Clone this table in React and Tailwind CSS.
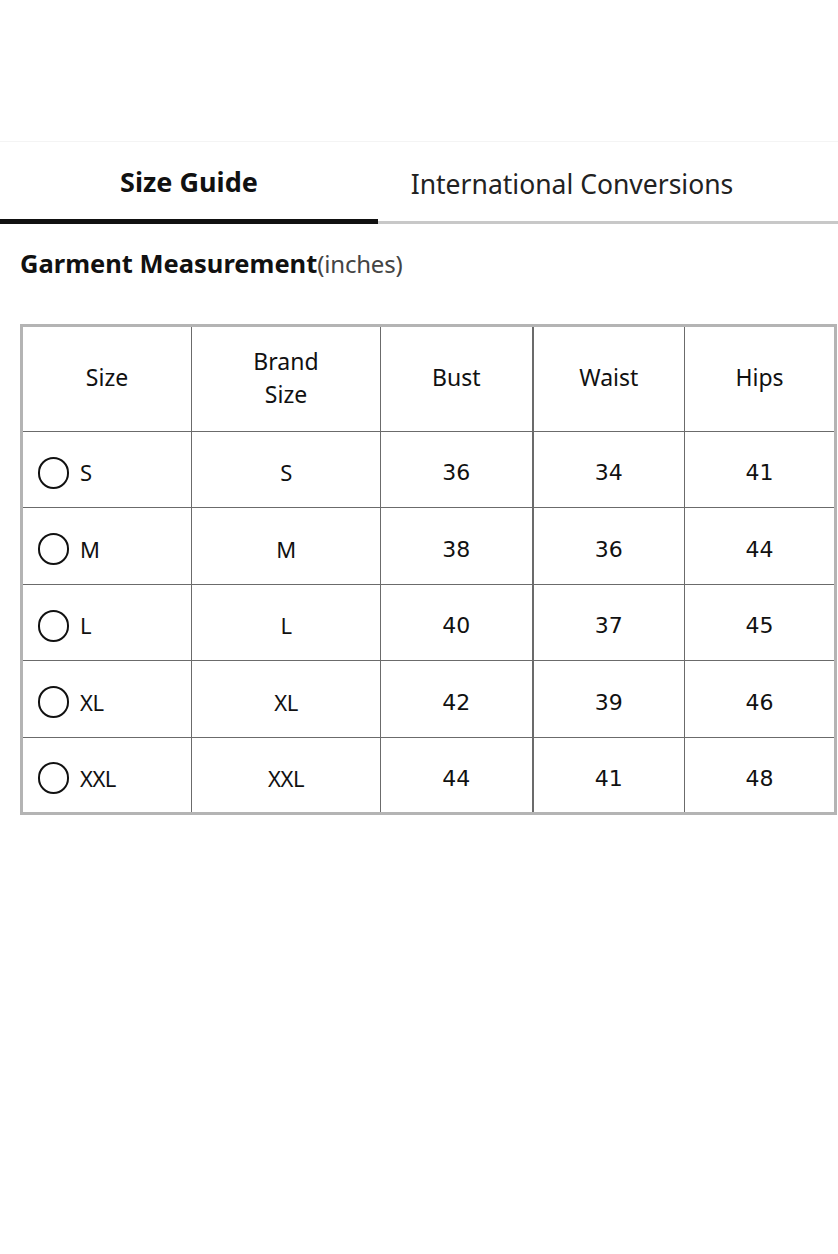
import React from "react";

const rows = [
  { size: "S", brand: "S", bust: 36, waist: 34, hips: 41 },
  { size: "M", brand: "M", bust: 38, waist: 36, hips: 44 },
  { size: "L", brand: "L", bust: 40, waist: 37, hips: 45 },
  { size: "XL", brand: "XL", bust: 42, waist: 39, hips: 46 },
  { size: "XXL", brand: "XXL", bust: 44, waist: 41, hips: 48 },
];

function App() {
  return (
    <div className="w-[838px] h-[1254px] bg-white text-[#111] font-['Noto_Sans',sans-serif]">
      <div className="h-[141px]" />

      {/* tabs */}
      <div className="flex h-[83px] border-t border-[#f4f4f4]">
        <div className="w-[378px] flex items-center justify-center border-b-[5px] border-[#111]">
          <span className="text-[27px] font-bold pt-[4px]">Size Guide</span>
        </div>
        <div className="flex-1 flex flex-col justify-end">
          <div className="flex-1 flex items-center justify-center pt-[6px] pr-[72px]">
            <span className="text-[26.5px] text-[#222]">International Conversions</span>
          </div>
          <div className="h-[3px] bg-[#c8c8c8]" />
        </div>
      </div>

      {/* heading */}
      <div className="px-[20px] pt-[20px] flex items-baseline">
        <span className="text-[25.5px] font-bold">Garment Measurement</span>
        <span className="text-[24px] text-[#444] tracking-[-0.2px]">(inches)</span>
      </div>

      {/* table */}
      <div className="pl-[20px] pt-[42px]">
        <table className="w-[814px] table-fixed border-collapse border-[3px] border-[#b4b4b4]">
          <colgroup>
            <col className="w-[170px]" />
            <col className="w-[189px]" />
            <col className="w-[152px]" />
            <col className="w-[152px]" />
            <col className="w-[151px]" />
          </colgroup>
          <thead>
            <tr className="h-[106px] text-[23px] leading-[33px]">
              <th className="border border-[#6b6b6b] font-normal pb-[3px]">Size</th>
              <th className="border border-[#6b6b6b] font-normal pb-[3px]">Brand<br />Size</th>
              <th className="border border-[#6b6b6b] border-r-2 font-normal pb-[3px]">Bust</th>
              <th className="border border-[#6b6b6b] font-normal pb-[3px]">Waist</th>
              <th className="border border-[#6b6b6b] font-normal pb-[3px]">Hips</th>
            </tr>
          </thead>
          <tbody>
            {rows.map((r, i) => (
              <tr key={r.size} className={i % 2 ? "h-[77px] text-[22px]" : "h-[76px] text-[22px]"}>
                <td className="border border-[#6b6b6b] pl-[15px] pt-[6px]">
                  <div className="flex items-center gap-[11px]">
                    <span className="w-[31px] h-[32px] rounded-full border-2 border-[#111] shrink-0" />
                    <span className="tracking-[-0.5px]">{r.size}</span>
                  </div>
                </td>
                <td className="border border-[#6b6b6b] pt-[6px] text-center tracking-[-0.5px]">{r.brand}</td>
                <td className="border border-[#6b6b6b] border-r-2 pt-[6px] text-center font-['DejaVu_Sans',sans-serif] text-[22px]">{r.bust}</td>
                <td className="border border-[#6b6b6b] pt-[6px] text-center font-['DejaVu_Sans',sans-serif] text-[22px]">{r.waist}</td>
                <td className="border border-[#6b6b6b] pt-[6px] text-center font-['DejaVu_Sans',sans-serif] text-[22px]">{r.hips}</td>
              </tr>
            ))}
          </tbody>
        </table>
      </div>
    </div>
  );
}

export default App;
